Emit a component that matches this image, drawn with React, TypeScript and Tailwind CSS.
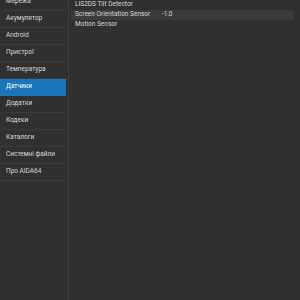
const MENU = [
  "Мережа",
  "Акумулятор",
  "Android",
  "Пристрої",
  "Температура",
  "Датчики",
  "Додатки",
  "Кодеки",
  "Каталоги",
  "Системні файли",
  "Про AIDA64",
];

const ROWS: { name: string; value?: string; active?: boolean }[] = [
  { name: "LIS2DS Tilt Detector" },
  { name: "Screen Orientation Sensor", value: "-1,0", active: true },
  { name: "Motion Sensor" },
];

export default function App() {
  return (
    <div
      className="flex h-[300px] w-[300px] overflow-hidden bg-[#303030] text-[6.5px] text-[#d6d6d6]"
      style={{ fontFamily: "Roboto, 'Liberation Sans', sans-serif" }}
    >
      {/* Sidebar */}
      <div className="w-[69px] shrink-0 border-r border-[#3e3e3e]">
        <div className="-mt-[6px] pr-[2px]">
          {MENU.map((item) => (
            <div
              key={item}
              className={`flex h-[17px] items-center whitespace-nowrap border-b pl-[6px] ${
                item === "Датчики"
                  ? "border-[#1b75bb] bg-[#1b75bb] text-white"
                  : "border-[#3a3a3a]"
              }`}
            >
              {item}
            </div>
          ))}
        </div>
      </div>

      {/* Detail list */}
      <div className="flex-1 pl-[2px] pr-[6px]">
        {ROWS.map((row) => (
          <div
            key={row.name}
            className={`flex h-[10px] items-center whitespace-nowrap pl-[4px] ${row.active ? "bg-[#3b3b3b]" : ""}`}
          >
            <span className="w-[87px] shrink-0">{row.name}</span>
            <span>{row.value}</span>
          </div>
        ))}
      </div>
    </div>
  );
}
